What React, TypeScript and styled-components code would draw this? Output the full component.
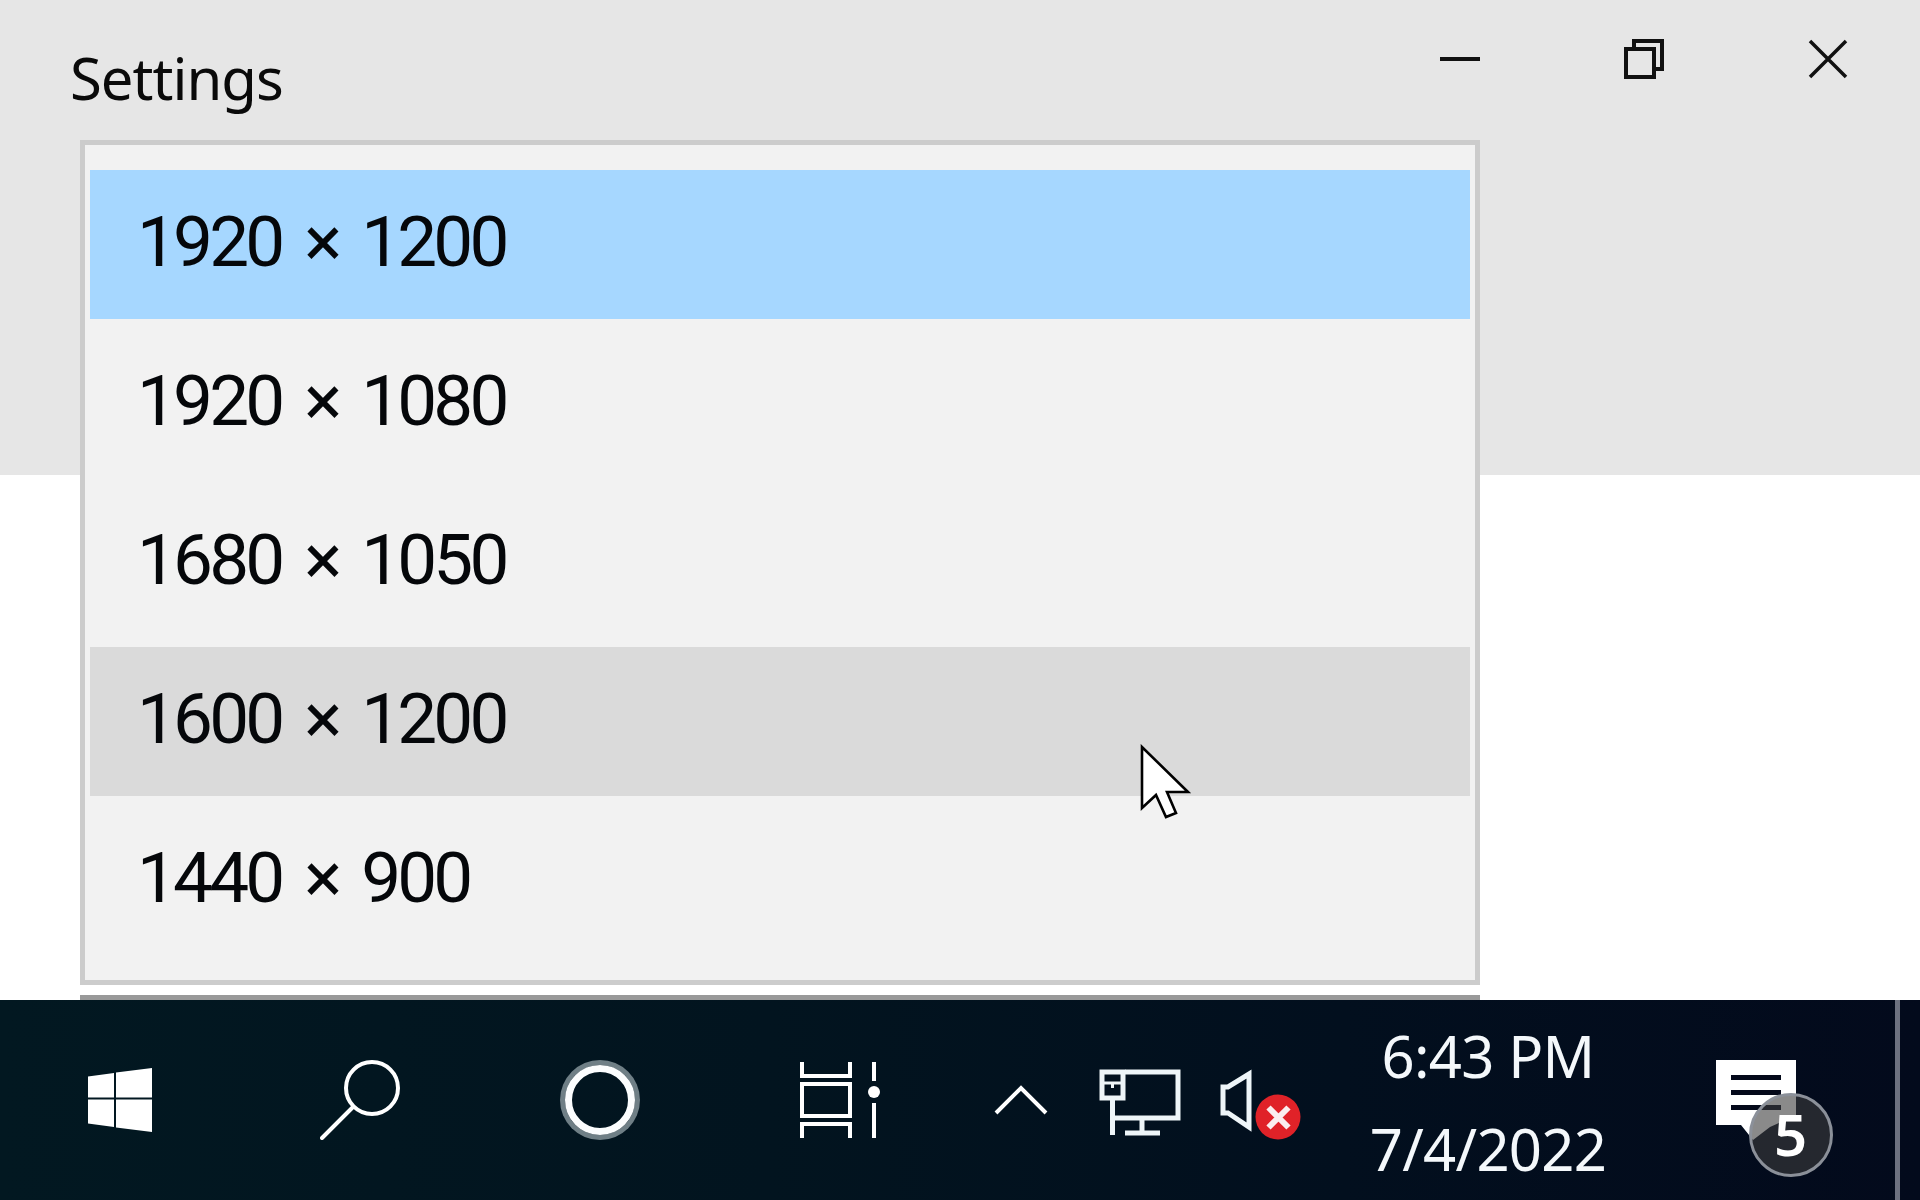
import styled, { createGlobalStyle } from 'styled-components';

const resolutions = ['1920 × 1200', '1920 × 1080', '1680 × 1050', '1600 × 1200', '1440 × 900'];

const GlobalStyle = createGlobalStyle`
  html, body {
    margin: 0;
    padding: 0;
    background: #ffffff;
  }
  * {
    box-sizing: border-box;
  }
`;

const App = () => {
  return (
    <Page>
      <GlobalStyle />
      <TitleBar>
        <Title>Settings</Title>
        <WindowControls>
          <ControlCell>
            <svg width="40" height="40" viewBox="1440 39 40 40">
              <rect x="1440" y="57" width="40" height="4" fill="#111" />
            </svg>
          </ControlCell>
          <ControlCell>
            <svg width="40" height="40" viewBox="1624 39 40 40" fill="none" stroke="#111" strokeWidth="4">
              <path d="M1634 47 V41 H1662 V69 H1654" />
              <rect x="1626" y="49" width="28" height="28" />
            </svg>
          </ControlCell>
          <ControlCell>
            <svg width="40" height="40" viewBox="1808 39 40 40" fill="none" stroke="#111" strokeWidth="3.5">
              <path d="M1810 41 L1846 77 M1846 41 L1810 77" />
            </svg>
          </ControlCell>
        </WindowControls>
      </TitleBar>

      <Dropdown>
        {resolutions.map((label, index) => (
          <Option key={label} $state={index === 0 ? 'selected' : index === 3 ? 'hover' : 'idle'}>
            {label}
          </Option>
        ))}
      </Dropdown>
      <NextControlEdge />
      <Cursor width="52" height="76" viewBox="1140 744 52 76">
        <path
          d="M1142 747 V808 L1156 795 L1166 817 L1176 813 L1167 792 H1188 Z"
          fill="#fff"
          stroke="#000"
          strokeWidth="2.6"
        />
      </Cursor>

      <Taskbar>
        <Cell $width={240}>
          <svg width="64" height="64" viewBox="88 1068 64 64" fill="#fff">
            <path d="M88 1076.5 L114 1073 V1097.5 H88 Z" />
            <path d="M116 1072.5 L152 1068 V1097.5 H116 Z" />
            <path d="M88 1099.5 H114 V1127 L88 1123.5 Z" />
            <path d="M116 1099.5 H152 V1132 L116 1127.5 Z" />
          </svg>
        </Cell>
        <Cell $width={240}>
          <svg width="80" height="80" viewBox="320 1060 80 80" fill="none" stroke="#fff" strokeWidth="4">
            <circle cx="372" cy="1088" r="26" />
            <path d="M353 1107 L322 1138" strokeLinecap="round" />
          </svg>
        </Cell>
        <Cell $width={240}>
          <CortanaRing />
        </Cell>
        <Cell $width={240}>
          <svg width="80" height="80" viewBox="800 1060 80 80" fill="none" stroke="#fff" strokeWidth="4">
            <path d="M802 1062 V1076 H850 V1062" />
            <rect x="802" y="1084" width="48" height="32" />
            <path d="M802 1138 V1124 H850 V1138" />
            <path d="M874 1062 V1081 M874 1103 V1138" />
            <circle cx="874" cy="1092" r="6" fill="#fff" stroke="none" />
          </svg>
        </Cell>
        <Cell $width={120}>
          <svg width="60" height="40" viewBox="990 1080 60 40" fill="none" stroke="#fff" strokeWidth="4">
            <path d="M996 1113 L1021 1088 L1046 1113" />
          </svg>
        </Cell>
        <Cell $width={120}>
          <svg width="84" height="80" viewBox="1099 1060 84 80" fill="none" stroke="#eef5f8" strokeWidth="5">
            <path d="M1126 1072 H1179 V1118 H1114" />
            <rect x="1103" y="1072" width="21" height="26" />
            <path d="M1103 1083 H1124 M1113.5 1083 V1088" strokeWidth="3" />
            <path d="M1113.5 1098 V1135" />
            <path d="M1143 1118 V1133 M1126 1133 H1161" />
          </svg>
        </Cell>
        <Cell $width={120}>
          <SpeakerIcon width="80" height="80" viewBox="1220 1060 80 80">
            <path d="M1249 1074 V1127 L1228 1113 H1223 V1087 H1228 Z" fill="none" stroke="#eef5f8" strokeWidth="5" />
            <circle cx="1278" cy="1117" r="22.5" fill="#e02228" />
            <path d="M1268.5 1107.5 L1288.5 1127.5 M1288.5 1107.5 L1268.5 1127.5" stroke="#fbeeee" strokeWidth="6" />
          </SpeakerIcon>
        </Cell>
        <Clock>
          <ClockLine>6:43 PM</ClockLine>
          <ClockLine>7/4/2022</ClockLine>
        </Clock>
        <Cell $width={239}>
          <ActionCenter>
            <svg width="120" height="120" viewBox="1715 1060 120 120">
              <path d="M1715 1060 H1795 V1115 L1769 1127 L1752 1140 L1740 1125 H1715 Z" fill="#fff" />
              <path d="M1730 1077.5 H1780 M1730 1092.5 H1780 M1730 1107.5 H1780" stroke="#04091a" strokeWidth="5" />
            </svg>
            <CountBadge>5</CountBadge>
          </ActionCenter>
        </Cell>
        <ShowDesktopLine />
      </Taskbar>
    </Page>
  );
};

const Page = styled.div`
  position: relative;
  display: flex;
  flex-direction: column;
  height: 1200px;
  overflow: hidden;
  background: #ffffff;
  color: #000000;
  font-family: 'Noto Sans', 'Open Sans', sans-serif;
`;

const TitleBar = styled.header`
  display: flex;
  justify-content: space-between;
  align-items: flex-start;
  flex: 0 0 475px;
  background: #e6e6e6;
`;

const Title = styled.h1`
  margin: 0;
  padding: 38px 0 0 70px;
  font-size: 58px;
  line-height: 80px;
  font-weight: 400;
  letter-spacing: -1px;
  color: #0a0a0a;
`;

const WindowControls = styled.div`
  display: flex;
`;

const ControlCell = styled.div`
  display: flex;
  align-items: center;
  justify-content: center;
  width: 184px;
  height: 118px;
`;

const Dropdown = styled.div`
  position: absolute;
  top: 140px;
  left: 80px;
  display: flex;
  flex-direction: column;
  gap: 10px;
  width: 1400px;
  height: 845px;
  padding: 25px 5px;
  background: #f2f2f2;
  border: 5px solid #cccccc;
`;

const Option = styled.div<{ $state: 'selected' | 'hover' | 'idle' }>`
  display: flex;
  align-items: center;
  flex: 0 0 149px;
  padding: 0 0 7px 47px;
  font-family: Roboto, 'Noto Sans', sans-serif;
  font-size: 71px;
  font-kerning: none;
  letter-spacing: -3.8px;
  word-spacing: 9px;
  color: #05070a;
  background: ${({ $state }) =>
    $state === 'selected' ? '#a6d7ff' : $state === 'hover' ? '#dadada' : 'transparent'};
`;

const NextControlEdge = styled.div`
  position: absolute;
  top: 995px;
  left: 80px;
  width: 1400px;
  height: 5px;
  background: #999999;
`;

const Cursor = styled.svg`
  position: absolute;
  top: 744px;
  left: 1140px;
`;

const Taskbar = styled.footer`
  display: flex;
  align-items: center;
  margin-top: auto;
  height: 200px;
  background: linear-gradient(90deg, #021821 0%, #02141f 40%, #020f1e 70%, #030a1c 100%);
`;

const Cell = styled.div<{ $width: number }>`
  display: flex;
  align-items: center;
  justify-content: center;
  flex: 0 0 ${({ $width }) => $width}px;
`;

const CortanaRing = styled.div`
  width: 70px;
  height: 70px;
  border-radius: 50%;
  border: 7.5px solid #fbfdfe;
  box-shadow: 0 0 0 5px #6f7f86;
`;

const SpeakerIcon = styled.svg`
  overflow: visible;
`;

const Clock = styled.div`
  display: flex;
  flex-direction: column;
  align-items: center;
  gap: 14px;
  flex: 0 0 336px;
  padding-top: 3px;
  color: #f4f8fb;
`;

const ClockLine = styled.div`
  font-size: 58px;
  line-height: 79px;
  letter-spacing: -0.7px;
`;

const ActionCenter = styled.div`
  position: relative;
  display: flex;
  width: 120px;
  height: 120px;
  margin-top: 40px;
`;

const CountBadge = styled.div`
  position: absolute;
  top: 33px;
  left: 33px;
  display: flex;
  align-items: center;
  justify-content: center;
  width: 84px;
  height: 84px;
  padding-bottom: 4px;
  border-radius: 50%;
  border: 3px solid #8b9099;
  background: rgba(60, 60, 60, 0.6);
  color: #ffffff;
  font-size: 58px;
  font-weight: 600;
`;

const ShowDesktopLine = styled.div`
  flex: 0 0 5px;
  align-self: stretch;
  background: #6d7180;
`;

export default App;
